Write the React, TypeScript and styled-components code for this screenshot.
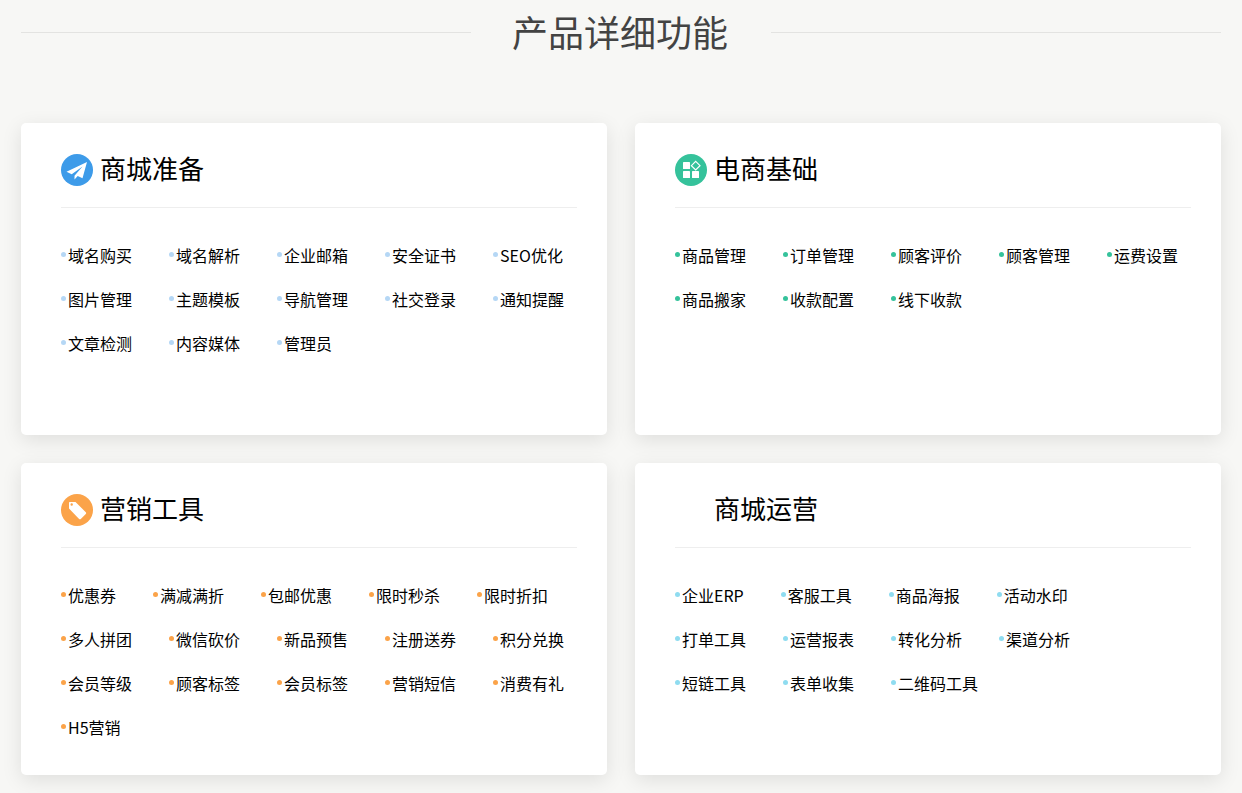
import React from 'react';
import styled, {createGlobalStyle} from "styled-components";

const GlobalStyle = createGlobalStyle`
  body {
    margin: 0;
    background: #f7f7f5;
    font-family: "Noto Sans CJK SC", "Liberation Sans", sans-serif;
  }
`

const Page = styled.div`
  height: 793px;
  overflow: hidden;
  padding: 0 21px;
  box-sizing: border-box;
`

const Heading = styled.div`
  display: flex;
  align-items: center;
  height: 65px;
  margin-bottom: 58px;

  &:before, &:after {
    content: '';
    flex: 1;
    height: 1px;
    background: #e3e3e1;
  }

  h1 {
    width: 298px;
    padding-right: 2px;
    margin: 0 0 2px;
    text-align: center;
    font-size: 36px;
    font-weight: 400;
    line-height: 63px;
    color: #434343;
  }
`

const Cards = styled.div`
  display: grid;
  grid-template-columns: 586px 586px;
  grid-auto-rows: 312px;
  gap: 28px;
`

const Card = styled.div`
  background: #fff;
  border-radius: 5px;
  box-shadow: 0 5px 20px rgba(0, 0, 0, 0.1);
  padding: 31px 30px 0 40px;
  box-sizing: border-box;
`

const CardHeader = styled.div`
  display: flex;
  align-items: center;
  gap: 7px;
  height: 32px;
  padding-bottom: 21px;
  border-bottom: 1px solid #eeeeee;
  margin-bottom: 26px;
`

const CardTitle = styled.span`
  margin-bottom: 6px;
  font-size: 26px;
  color: #000;
`

const IconCircle = styled.span<{ $color: string }>`
  display: block;
  flex: none;
  width: 32px;
  height: 32px;
  border-radius: 50%;
  background: ${p => p.$color};

  svg {
    display: block;
  }
`

const Row = styled.div`
  display: flex;
  gap: 37px;
  height: 44px;
  align-items: center;
`

const Item = styled.div<{ $dot: string }>`
  display: flex;
  align-items: center;
  padding-bottom: 2px;
  font-size: 16px;
  line-height: 24px;
  color: #000;
  white-space: nowrap;

  &:before {
    content: '';
    width: 5px;
    height: 5px;
    margin: 0 2px 2px 0;
    border-radius: 50%;
    background: ${p => p.$dot};
  }
`

const PlaneIcon = () => (
    <svg width="32" height="32" viewBox="0 0 32 32">
        <path fill="#fff" d="M26 8 5.500 17.800l5.200 2.400L21.500 12.500 13.500 21.800V25.500l3.200-3.400 4.800 2.200z"/>
    </svg>
)

const GridIcon = () => (
    <svg width="32" height="32" viewBox="0 0 32 32">
        <rect fill="#fff" x="8" y="8" width="7" height="7" rx="0.6"/>
        <rect fill="#fff" x="8" y="17" width="7" height="7" rx="0.6"/>
        <rect fill="#fff" x="17" y="17" width="7" height="7" rx="0.6"/>
        <path fill="none" stroke="#fff" strokeWidth="1.2" d="M20.700 7.300 25 11.700 20.700 16l-4.300-4.300z"/>
    </svg>
)

const TagIcon = () => (
    <svg width="32" height="32" viewBox="0 0 32 32">
        <path fill="#fff" fillRule="evenodd"
              d="M8 9c0-.6.4-1 1-1h5.500l10.300 10.200c.5.500.5 1.200 0 1.700l-5 5c-.5.500-1.200.500-1.700 0L8 14.500zM10.700 9.300a1.200 1.200 0 1 0 0 2.400 1.200 1.200 0 0 0 0-2.400z"/>
    </svg>
)

const sections = [
    {
        title: '商城准备', color: '#3d9be9', dot: '#b5d7f5', icon: <PlaneIcon/>,
        rows: [
            ['域名购买', '域名解析', '企业邮箱', '安全证书', 'SEO优化'],
            ['图片管理', '主题模板', '导航管理', '社交登录', '通知提醒'],
            ['文章检测', '内容媒体', '管理员'],
        ],
    },
    {
        title: '电商基础', color: '#35c29b', dot: '#35c29b', icon: <GridIcon/>,
        rows: [
            ['商品管理', '订单管理', '顾客评价', '顾客管理', '运费设置'],
            ['商品搬家', '收款配置', '线下收款'],
        ],
    },
    {
        title: '营销工具', color: '#fba349', dot: '#fba349', icon: <TagIcon/>,
        rows: [
            ['优惠券', '满减满折', '包邮优惠', '限时秒杀', '限时折扣'],
            ['多人拼团', '微信砍价', '新品预售', '注册送券', '积分兑换'],
            ['会员等级', '顾客标签', '会员标签', '营销短信', '消费有礼'],
            ['H5营销'],
        ],
    },
    {
        title: '商城运营', color: 'transparent', dot: '#8fdcf0', icon: null,
        rows: [
            ['企业ERP', '客服工具', '商品海报', '活动水印'],
            ['打单工具', '运营报表', '转化分析', '渠道分析'],
            ['短链工具', '表单收集', '二维码工具'],
        ],
    },
]

const App = () => {
    return (
        <Page>
            <GlobalStyle/>
            <Heading>
                <h1>产品详细功能</h1>
            </Heading>
            <Cards>
                {sections.map(section => (
                    <Card key={section.title}>
                        <CardHeader>
                            <IconCircle $color={section.color}>{section.icon}</IconCircle>
                            <CardTitle>{section.title}</CardTitle>
                        </CardHeader>
                        {section.rows.map((row, i) => (
                            <Row key={i}>
                                {row.map(name => (
                                    <Item key={name} $dot={section.dot}>{name}</Item>
                                ))}
                            </Row>
                        ))}
                    </Card>
                ))}
            </Cards>
        </Page>
    );
};

export default App;
